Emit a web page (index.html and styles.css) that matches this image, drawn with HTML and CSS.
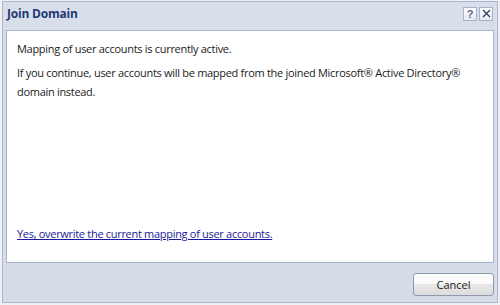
FILE: index.html
```html
<!DOCTYPE html>
<html lang="en">

<head>
    <meta charset="UTF-8">
    <title>Join Domain</title>
    <link rel="stylesheet" href="styles.css">
</head>

<body>
    <div class="dialog">
        <!-- Title bar -->
        <div class="title-bar">
            <span class="title">Join Domain</span>
            <div class="title-buttons">
                <button class="title-btn">?</button>
                <button class="title-btn">
                    <svg width="9" height="9" viewBox="0 0 9 9">
                        <path d="M1 1 L8 8 M8 1 L1 8" stroke="#2b3c5c" stroke-width="1.3" fill="none" />
                    </svg>
                </button>
            </div>
        </div>

        <!-- Message panel -->
        <div class="panel">
            <div class="messages">
                <p>Mapping of user accounts is currently active.</p>
                <p>If you continue, user accounts will be mapped from the joined Microsoft® Active Directory® domain instead.</p>
            </div>
            <a href="#" class="confirm-link">Yes, overwrite the current mapping of user accounts.</a>
        </div>

        <!-- Footer -->
        <div class="footer">
            <button class="cancel-btn">Cancel</button>
        </div>
    </div>
</body>

</html>
```

FILE: styles.css
```css
body {
    margin: 0;
    background-color: #eef1f6;
    font-family: 'Open Sans', 'Liberation Sans', sans-serif;
    font-size: 11px;
    letter-spacing: -0.3px;
    color: #1a1a1a;
}

.dialog {
    margin: 1px 2px 2px 2px;
    height: 300px;
    border: 1px solid #aab6cb;
    background-color: #d6dde9;
    display: flex;
    flex-direction: column;
}

.title-bar {
    height: 28px;
    box-sizing: border-box;
    display: flex;
    align-items: center;
    justify-content: space-between;
    padding: 0 4px 5px 4px;
    background-color: #d9dfea;
}

.title {
    font-weight: bold;
    font-size: 12px;
    letter-spacing: -0.2px;
    color: #1d3a73;
}

.title-buttons {
    display: flex;
    gap: 2px;
}

.title-btn {
    width: 14px;
    height: 14px;
    padding: 0;
    border: 1px solid #a4b2ca;
    background: linear-gradient(#ffffff, #e4e9f2);
    color: #5a6a88;
    font-family: 'Liberation Sans', sans-serif;
    font-weight: bold;
    font-size: 11px;
    line-height: 12px;
    display: flex;
    align-items: center;
    justify-content: center;
}

.panel {
    margin: 0 3px;
    height: 233px;
    box-sizing: border-box;
    background-color: #ffffff;
    border: 1px solid #a7b4ca;
    padding: 8px 10px 21px 10px;
    display: flex;
    flex-direction: column;
    justify-content: space-between;
}

.messages p {
    margin: 0 0 5px 0;
    line-height: 19px;
}

.confirm-link {
    color: #1a1a9c;
    text-decoration: underline;
}

.footer {
    flex: 1;
    display: flex;
    justify-content: flex-end;
    align-items: flex-start;
    padding: 10px 3px 0 3px;
}

.cancel-btn {
    width: 81px;
    height: 23px;
    font-family: 'Open Sans', 'Liberation Sans', sans-serif;
    font-size: 11px;
    color: #1a1a1a;
    border: 1px solid #8e9aab;
    border-radius: 3px;
    background: linear-gradient(#fbfbfb 50%, #e8e8e8 50%, #dcdcdc);
}
```
